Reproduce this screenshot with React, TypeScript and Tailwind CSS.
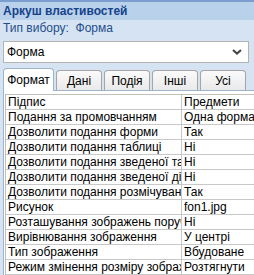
import React from "react";

const rows: [string, string][] = [
  ["Підпис", "Предмети"],
  ["Подання за промовчанням", "Одна форма"],
  ["Дозволити подання форми", "Так"],
  ["Дозволити подання таблиці", "Ні"],
  ["Дозволити подання зведеної таблиці", "Ні"],
  ["Дозволити подання зведеної діаграми", "Ні"],
  ["Дозволити подання розмічування", "Так"],
  ["Рисунок", "fon1.jpg"],
  ["Розташування зображень поруч", "Ні"],
  ["Вирівнювання зображення", "У центрі"],
  ["Тип зображення", "Вбудоване"],
  ["Режим змінення розміру зображення", "Розтягнути"],
  ["", ""],
];

const tabs = ["Формат", "Дані", "Подія", "Інші", "Усі"];

export default function App() {
  return (
    <div
      className="w-[254px] h-[275px] overflow-hidden bg-[#d5e3f2] border-t-2 border-[#7c9dd0] flex flex-col text-[12px] leading-none"
      style={{ fontFamily: '"Liberation Sans", Arial, sans-serif' }}
    >
      <div className="h-[18px] shrink-0 bg-[#b9d1ea] flex items-center pl-[3px] text-[12px] font-bold text-[#15428b]">
        Аркуш властивостей
      </div>
      <div className="h-[16px] shrink-0 flex items-center pl-[3px] text-[#1f4e8c]">
        Тип вибору:&nbsp;&nbsp;Форма
      </div>
      <div className="mt-[5px] ml-[3px] mr-[5px] h-[22px] shrink-0 bg-white border border-[#b4b4b4] flex items-center justify-between pl-[3px] pr-[6px] text-black">
        <span>Форма</span>
        <svg width="10" height="6" viewBox="0 0 10 6">
          <path d="M1 1 L5 4.6 L9 1" stroke="#444" strokeWidth="2" fill="none" />
        </svg>
      </div>
      <div className="mt-[4px] h-[23px] shrink-0 flex items-end pl-[3px] gap-[2px]">
        {tabs.map((t, i) =>
          i === 0 ? (
            <div
              key={t}
              className="w-[51px] h-[23px] bg-white border border-b-0 border-[#9fb3cc] rounded-t-[4px] flex items-center justify-center text-black relative -mb-px z-10"
            >
              {t}
            </div>
          ) : (
            <div
              key={t}
              className="w-[46px] h-[20px] bg-gradient-to-b from-[#fbfbfb] to-[#e9e9e9] border border-b-0 border-[#a5a5a5] rounded-t-[4px] flex items-center justify-center text-black"
            >
              {t}
            </div>
          )
        )}
      </div>
      <div className="ml-[3px] flex-1 bg-white border-t border-l border-[#9fb3cc] pt-[3px] pl-[1px]">
        <div className="border-t border-l border-[#bfbfbf]">
          {rows.map(([k, v], i) => (
            <div key={i} className="flex h-[15px] border-b border-[#c8c8c8]">
              <div className="w-[176px] shrink-0 border-r border-[#c8c8c8] pl-[2px] flex items-center overflow-hidden whitespace-nowrap">
                {k}
              </div>
              <div className="flex-1 pl-[2px] flex items-center whitespace-nowrap overflow-hidden">
                {v}
              </div>
            </div>
          ))}
        </div>
      </div>
    </div>
  );
}
